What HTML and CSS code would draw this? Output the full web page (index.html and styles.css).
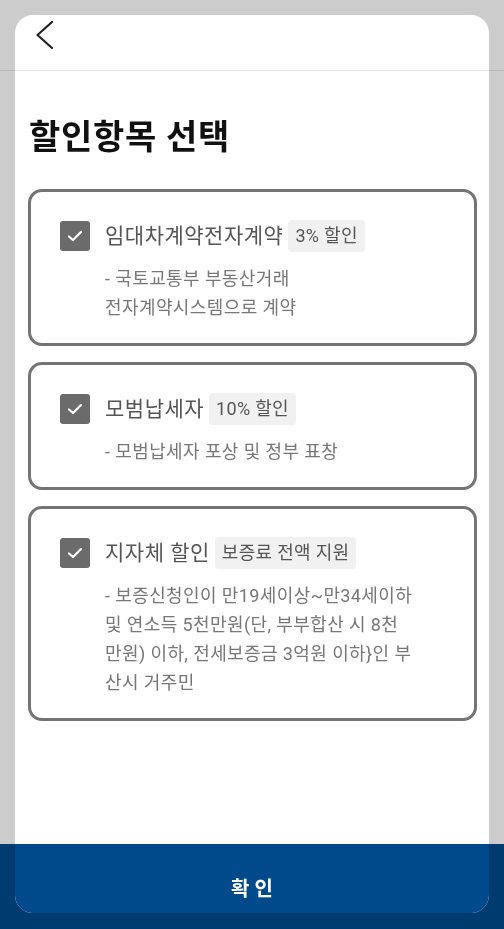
FILE: index.html
```html
<!DOCTYPE html>
<html lang="ko">
<head>
<meta charset="utf-8">
<title>할인항목 선택</title>
<link rel="stylesheet" href="styles.css">
</head>
<body>
<div class="under">
  <div class="under-header"></div>
  <div class="under-body"></div>
  <div class="under-footer"></div>
</div>

<div class="sheet">
  <div class="sheet-header">
    <svg class="back" width="18" height="30" viewBox="0 0 18 30">
      <polyline points="16,1 1.5,14 16,27" fill="none" stroke="#222" stroke-width="2.2" stroke-linecap="round" stroke-linejoin="round"/>
    </svg>
  </div>
  <div class="sheet-content">
    <h1 class="title">할인항목 선택</h1>
    <div class="cards">
      <div class="card">
        <div class="row">
          <span class="check"><svg width="16" height="12" viewBox="0 0 16 12"><polyline points="2,6.5 6,10 14,2" fill="none" stroke="#fff" stroke-width="2.2" stroke-linecap="round" stroke-linejoin="round"/></svg></span>
          <span class="label">임대차계약전자계약</span>
          <span class="badge">3% 할인</span>
        </div>
        <p class="desc">- 국토교통부 부동산거래<br>전자계약시스템으로 계약</p>
      </div>
      <div class="card">
        <div class="row">
          <span class="check"><svg width="16" height="12" viewBox="0 0 16 12"><polyline points="2,6.5 6,10 14,2" fill="none" stroke="#fff" stroke-width="2.2" stroke-linecap="round" stroke-linejoin="round"/></svg></span>
          <span class="label">모범납세자</span>
          <span class="badge">10% 할인</span>
        </div>
        <p class="desc">- 모범납세자 포상 및 정부 표창</p>
      </div>
      <div class="card">
        <div class="row">
          <span class="check"><svg width="16" height="12" viewBox="0 0 16 12"><polyline points="2,6.5 6,10 14,2" fill="none" stroke="#fff" stroke-width="2.2" stroke-linecap="round" stroke-linejoin="round"/></svg></span>
          <span class="label">지자체 할인</span>
          <span class="badge">보증료 전액 지원</span>
        </div>
        <p class="desc">- 보증신청인이 만19세이상~만34세이하<br>및 연소득 5천만원(단, 부부합산 시 8천<br>만원) 이하, 전세보증금 3억원 이하}인 부<br>산시 거주민</p>
      </div>
    </div>
  </div>
  <button class="confirm">확 인</button>
</div>
</body>
</html>
```

FILE: styles.css
```css
* { box-sizing: border-box; }
html, body { margin: 0; padding: 0; height: 100%; }
body {
  background: #cccccc;
  font-family: Roboto, "Noto Sans CJK KR", sans-serif;
  overflow: hidden;
}
.under {
  height: 100vh;
  display: flex;
  flex-direction: column;
}
.under-header {
  height: 71px;
  border-bottom: 1px solid #b8b8b8;
}
.under-body { flex: 1; }
.under-footer {
  height: 85px;
  background: #003b70;
}
.sheet {
  position: fixed;
  top: 15px;
  left: 15px;
  right: 15px;
  bottom: 16px;
  background: #fff;
  border-radius: 18px;
  display: flex;
  flex-direction: column;
  overflow: hidden;
}
.sheet-header {
  height: 56px;
  flex: none;
  border-bottom: 1px solid #e6e6e6;
  padding: 6px 0 0 21px;
}
.back { display: block; }
.sheet-content {
  flex: 1;
  padding: 0 12px 0 13px;
}
.title {
  margin: 46px 0 32px;
  padding-left: 1px;
  font-size: 34px;
  line-height: 40px;
  letter-spacing: 0.7px;
  font-weight: 700;
  color: #111;
}
.cards {
  display: flex;
  flex-direction: column;
  gap: 16px;
}
.card {
  border: 3px solid #747474;
  border-radius: 14px;
  padding: 28px 20px 21px 29px;
}
.row {
  display: flex;
  align-items: center;
  height: 32px;
}
.check {
  width: 30px;
  height: 30px;
  background: #6b6b6b;
  border-radius: 3px;
  display: flex;
  align-items: center;
  justify-content: center;
  flex: none;
}
.check svg { display: block; }
.label {
  margin-left: 15px;
  font-size: 21px;
  letter-spacing: 0.5px;
  color: #555;
  line-height: 32px;
}
.badge {
  margin-left: 5px;
  height: 32px;
  line-height: 32px;
  padding: 0 7px;
  background: #f1f1f1;
  border-radius: 4px;
  font-size: 18px;
  letter-spacing: 0.3px;
  color: #555;
}
.desc {
  margin: 12px 0 0 45px;
  font-size: 18px;
  line-height: 29px;
  letter-spacing: 0.4px;
  color: #777;
  white-space: nowrap;
}
.confirm {
  flex: none;
  height: 69px;
  border: none;
  margin: 0;
  padding: 21px 0 0;
  background: #004a8c;
  color: #fff;
  font-family: Roboto, "Noto Sans CJK KR", sans-serif;
  font-size: 20px;
  font-weight: 700;
  line-height: 24px;
  text-align: center;
}
```
